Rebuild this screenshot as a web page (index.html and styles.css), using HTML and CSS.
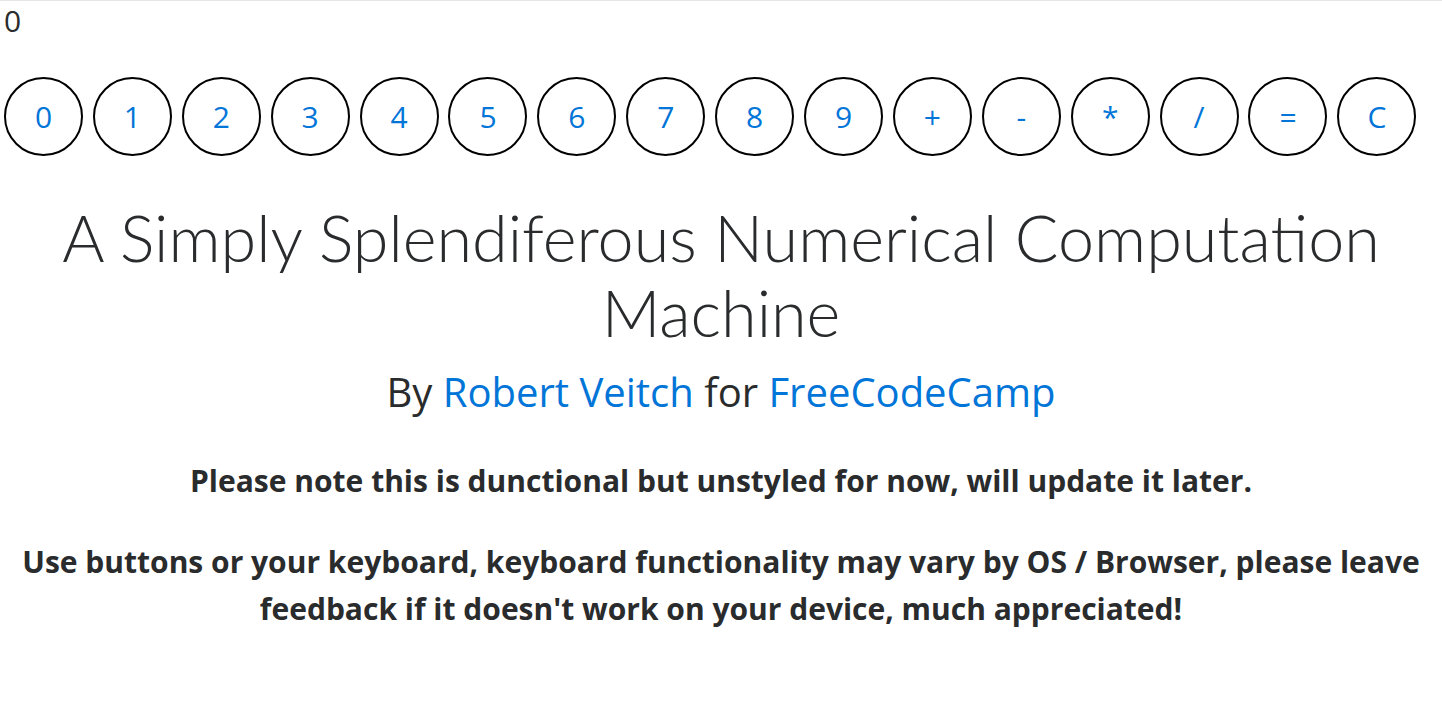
FILE: index.html
```html
<!DOCTYPE html>
<html>
<head>
<meta charset="utf-8">
<link rel="stylesheet" href="styles.css">
</head>
<body>
<div class="display">0</div>
<div class="keys">
  <button class="key">0</button>
  <button class="key">1</button>
  <button class="key">2</button>
  <button class="key">3</button>
  <button class="key">4</button>
  <button class="key">5</button>
  <button class="key">6</button>
  <button class="key">7</button>
  <button class="key">8</button>
  <button class="key">9</button>
  <button class="key">+</button>
  <button class="key">-</button>
  <button class="key">*</button>
  <button class="key">/</button>
  <button class="key">=</button>
  <button class="key">C</button>
</div>
<div class="info">
  <h1 class="title">A Simply Splendiferous Numerical Computation Machine</h1>
  <h2 class="byline">By <a href="#">Robert Veitch</a> for <a href="#">FreeCodeCamp</a></h2>
  <p class="note">Please note this is dunctional but unstyled for now, will update it later.</p>
  <p class="note">Use buttons or your keyboard, keyboard functionality may vary by OS / Browser, please leave feedback if it doesn't work on your device, much appreciated!</p>
</div>
</body>
</html>
```

FILE: styles.css
```css
html, body {
  margin: 0;
  padding: 0;
  background: #fff;
}
body {
  border-top: 1px solid #e6e6e6;
  font-family: "Open Sans", "Noto Sans", sans-serif;
  color: #292b2c;
}
.display {
  padding-left: 4px;
  font-size: 30px;
  line-height: 40px;
  height: 40px;
}
.keys {
  display: flex;
  gap: 9.9px;
  padding-left: 4px;
  margin-top: 36px;
}
.key {
  flex: 0 0 auto;
  width: 79px;
  height: 79px;
  box-sizing: border-box;
  border: 2px solid #000;
  border-radius: 50%;
  background: #fff;
  color: #0275d8;
  font-family: "Open Sans", "Noto Sans", sans-serif;
  font-size: 30px;
  padding: 0;
  line-height: 1;
}
.info {
  padding: 0 15px;
  text-align: center;
}
.title {
  margin: 44px 0 0;
  font-family: "Lato", sans-serif;
  font-weight: 300;
  font-size: 64.7px;
  line-height: 75px;
}
.byline {
  margin: 18px 0 0;
  padding-bottom: 7px;
  font-weight: 400;
  font-size: 40px;
  line-height: 48px;
}
.byline a {
  color: #0275d8;
  text-decoration: none;
}
.note {
  margin: 34px 0 0;
  font-weight: 700;
  font-size: 30px;
  line-height: 47px;
}
```
